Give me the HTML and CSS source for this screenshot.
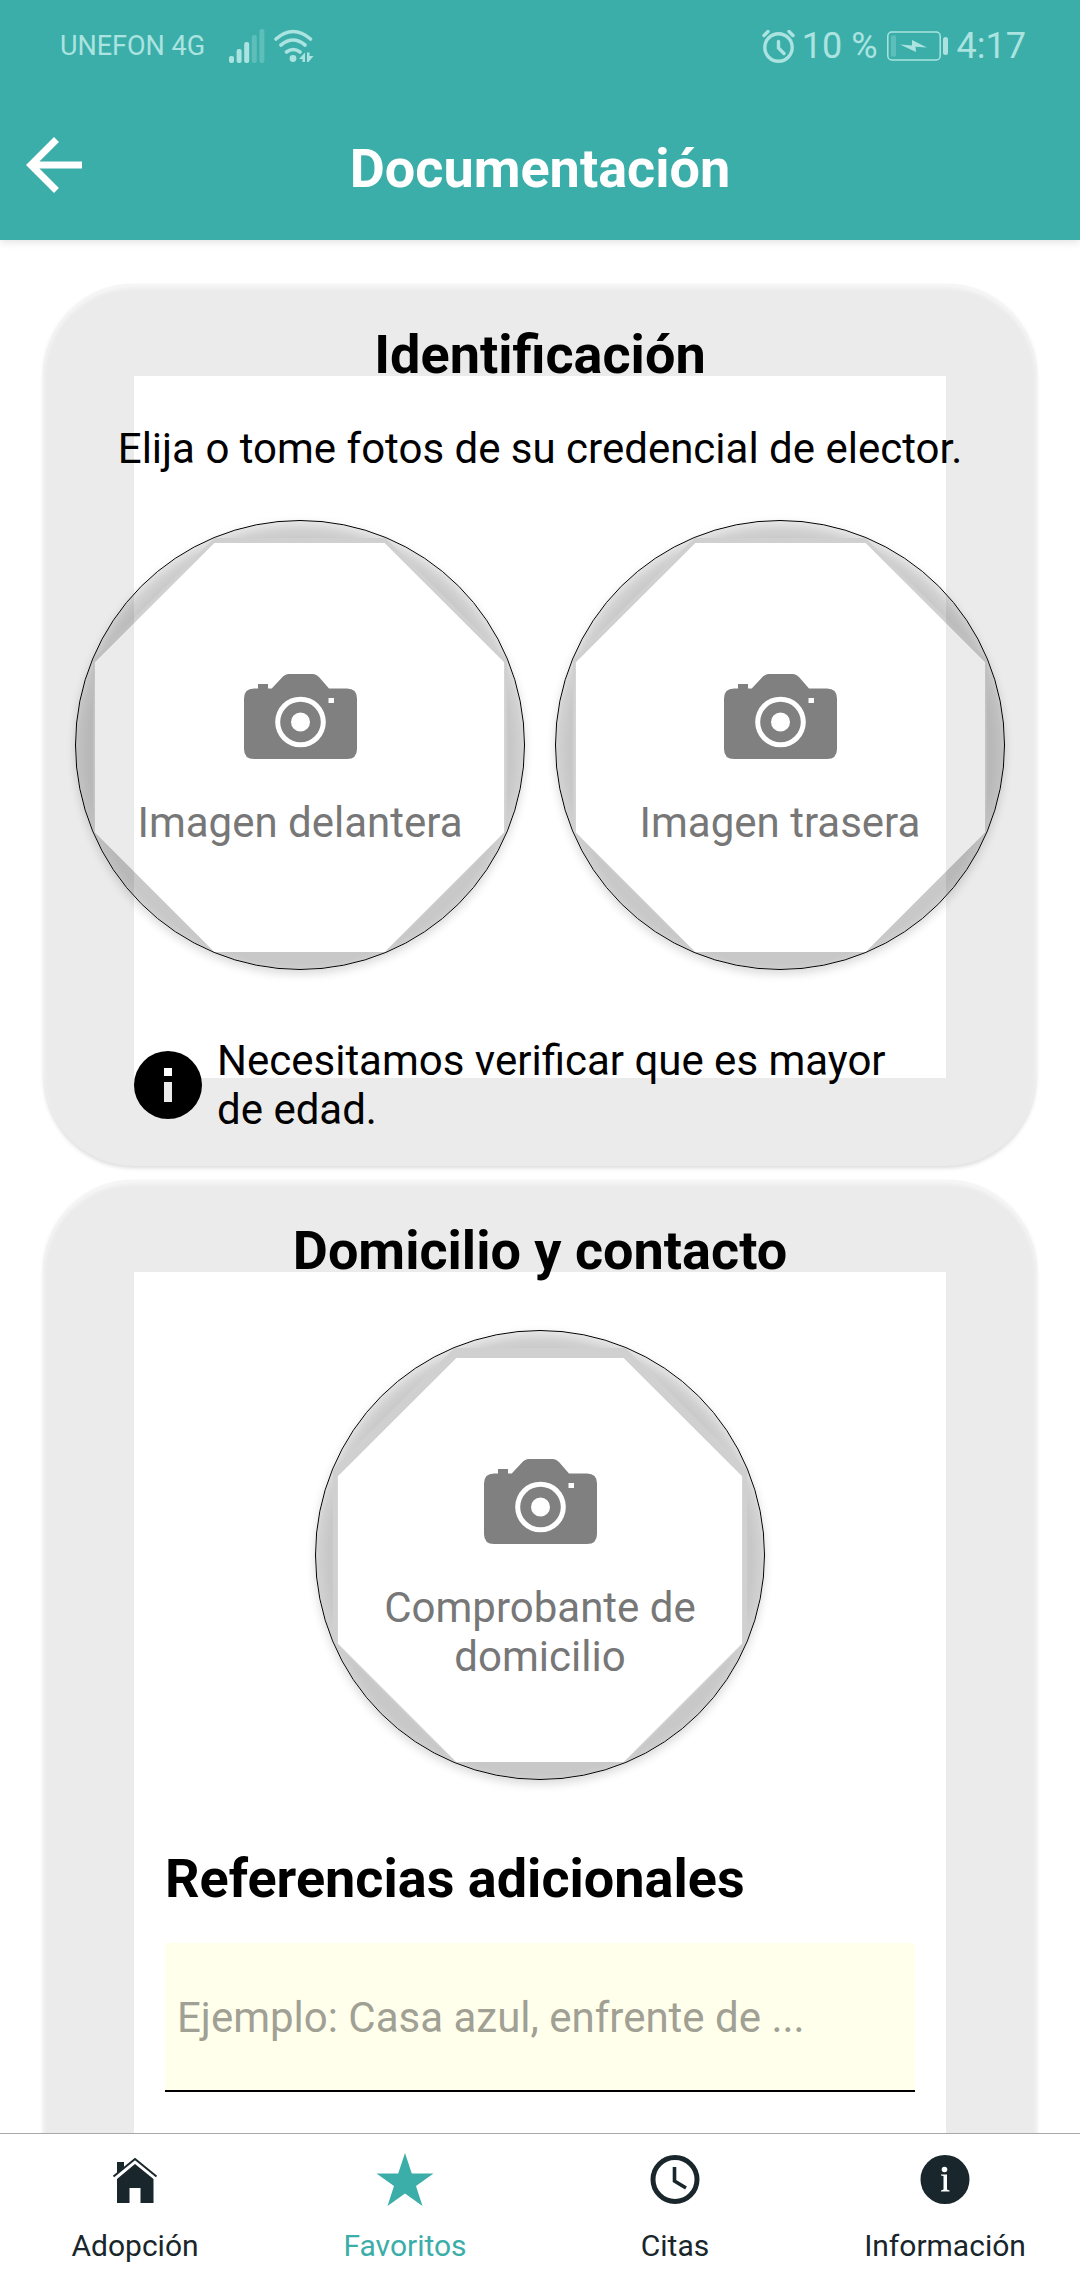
FILE: index.html
```html
<!DOCTYPE html>
<html lang="es">
<head>
<meta charset="utf-8">
<meta name="viewport" content="width=device-width, initial-scale=1">
<title>Documentación</title>
<link rel="stylesheet" href="styles.css">
</head>
<body>
<svg class="defs" width="0" height="0" aria-hidden="true">
  <defs>
    <radialGradient id="rim" gradientUnits="userSpaceOnUse" cx="225" cy="232" r="234">
      <stop offset="0.91" stop-color="#000" stop-opacity="0.216"/>
      <stop offset="0.95" stop-color="#000" stop-opacity="0.18"/>
      <stop offset="1" stop-color="#000" stop-opacity="0.08"/>
    </radialGradient>
    <clipPath id="disc"><circle cx="225" cy="225" r="225"/></clipPath>
    <symbol id="camera" viewBox="0 0 113 85">
      <path fill-rule="evenodd" d="M10 14.500H14V10H24V14.500H27.700L38 3.500Q41 0 45 0H69Q72 0 75 3L85 14.500H103Q113 14.500 113 24.500V75Q113 85 103 85H10Q0 85 0 75V24.500Q0 14.500 10 14.500ZM56.500 22.700a25.300 25.300 0 1 0 0 50.600a25.300 25.300 0 1 0 0-50.600ZM56.500 27.700a20.300 20.300 0 1 1 0 40.600a20.300 20.300 0 1 1 0-40.600ZM56.500 38.500a9.500 9.500 0 1 0 0 19a9.500 9.500 0 1 0 0-19ZM84.500 24H90V29H84.500Z"/>
    </symbol>
  </defs>
</svg>

<header class="top">
  <div class="status">
    <span class="carrier">UNEFON 4G</span>
    <svg class="signal" width="36" height="34" viewBox="0 0 36 34" aria-hidden="true">
      <rect x="0" y="27" width="5" height="7" rx="2"/><rect x="7.600" y="20" width="5" height="14" rx="2"/><rect x="15.200" y="13" width="5" height="21" rx="2"/>
      <rect class="dim" x="22.800" y="6" width="5" height="28" rx="2"/><rect class="dim" x="30.400" y="0" width="5" height="34" rx="2"/>
    </svg>
    <svg class="wifi" width="40" height="34" viewBox="0 0 40 34" aria-hidden="true">
      <g fill="none" stroke="currentColor" stroke-width="3.600" stroke-linecap="round"><path d="M2 10Q19 -5 36.500 10M7 16Q19 6 31 16M12.500 23Q19 18 26 23"/></g>
      <circle cx="19" cy="29.500" r="3.400"/><path d="M25 30L31 23.500V33H28.500V30ZM33 23.500H35.500V27H39.500L34.500 33H33Z"/>
    </svg>
    <span class="spacer"></span>
    <svg class="alarm" width="33" height="34" viewBox="0 0 33 34" aria-hidden="true">
      <g fill="none" stroke="currentColor" stroke-linecap="round"><circle cx="16.500" cy="18.500" r="13.700" stroke-width="3.400"/><path stroke-width="3.400" d="M2 6.500L6 2.500M27 2.500L31 6.500M16.500 12.500V19L22 24.500"/></g>
    </svg>
    <span class="clock">10 %</span>
    <svg class="battery" width="61" height="30" viewBox="0 0 61 30" aria-hidden="true">
      <rect x="0.800" y="1" width="52.400" height="28" rx="4" fill="none" stroke="currentColor" stroke-width="1.500"/>
      <rect class="dim" x="4" y="4.500" width="5" height="21" rx="1"/><rect x="56" y="6" width="5" height="18" rx="2.500"/>
      <path d="M13 13.500L25 14.500L25 9L40 16.500L28.500 15.800L29 21Z"/>
    </svg>
    <span class="clock time">4:17</span>
  </div>
  <div class="appbar">
    <button class="back" type="button" aria-label="Volver">
      <svg width="84" height="84" viewBox="0 0 24 24" aria-hidden="true"><path d="M20 11H7.830l5.590-5.590L12 4l-8 8 8 8 1.410-1.410L7.830 13H20v-2z"/></svg>
    </button>
    <h1 class="title">Documentación</h1>
  </div>
</header>

<main class="content">
  <section class="card">
    <h2 class="heading">Identificación</h2>
    <p class="lead">Elija o tome fotos de su credencial de elector.</p>
    <div class="photos">
      <button class="photo" type="button">
        <svg class="ring" viewBox="0 0 450 450" aria-hidden="true">
          <g clip-path="url(#disc)" fill-rule="evenodd">
            <path fill="url(#rim)" d="M0 0H450V450H0ZM139 17H311L433 139V311L311 433H139L17 311V139Z"/>
            <path fill="#000" fill-opacity="0.185" d="M139 17H311L433 139V311L311 433H139L17 311V139ZM139 22L19 142V313L139 433H310L430 313V142L310 22Z"/>
          </g>
        </svg>
        <svg class="camera" width="113" height="85" aria-hidden="true"><use href="#camera"/></svg>
        <span>Imagen delantera</span>
      </button>
      <button class="photo" type="button">
        <svg class="ring" viewBox="0 0 450 450" aria-hidden="true">
          <g clip-path="url(#disc)" fill-rule="evenodd">
            <path fill="url(#rim)" d="M0 0H450V450H0ZM139 17H311L433 139V311L311 433H139L17 311V139Z"/>
            <path fill="#000" fill-opacity="0.185" d="M139 17H311L433 139V311L311 433H139L17 311V139ZM140 22L20 142V313L140 433H311L431 313V142L311 22Z"/>
          </g>
        </svg>
        <svg class="camera" width="113" height="85" aria-hidden="true"><use href="#camera"/></svg>
        <span>Imagen trasera</span>
      </button>
    </div>
    <div class="notice">
      <svg width="68" height="68" viewBox="0 0 68 68" aria-hidden="true"><path fill-rule="evenodd" d="M34 0a34 34 0 1 0 0 68a34 34 0 1 0 0-68ZM30 17H38V25H30ZM30 31H38V51H30Z"/></svg>
      <p>Necesitamos verificar que es mayor de edad.</p>
    </div>
  </section>

  <section class="card">
    <h2 class="heading">Domicilio y contacto</h2>
    <div class="photos">
      <button class="photo" type="button">
        <svg class="ring" viewBox="0 0 450 450" aria-hidden="true">
          <g clip-path="url(#disc)" fill-rule="evenodd">
            <path fill="url(#rim)" d="M0 0H450V450H0ZM139 17H311L433 139V311L311 433H139L17 311V139Z"/>
            <path fill="#000" fill-opacity="0.185" d="M139 17H311L433 139V311L311 433H139L17 311V139ZM141 27L22 146V314L141 433H309L428 314V146L309 27Z"/>
          </g>
        </svg>
        <svg class="camera" width="113" height="85" aria-hidden="true"><use href="#camera"/></svg>
        <span>Comprobante de domicilio</span>
      </button>
    </div>
    <div class="field">
      <label class="heading" for="referencias">Referencias adicionales</label>
      <input id="referencias" type="text" placeholder="Ejemplo: Casa azul, enfrente de ...">
    </div>
  </section>
</main>

<nav class="tabs">
  <a class="tab" href="#adopcion">
    <svg width="60" height="60" viewBox="0 0 60 60" aria-hidden="true"><path d="M12 29L30 14L48.500 29V53H35.500V38H24.500V53H12Z"/><path d="M12 23.500V12H19V17.500Z"/><path fill="none" stroke="currentColor" stroke-width="2" d="M8.500 26.500L30 9L51.500 26.500"/></svg>
    <span>Adopción</span>
  </a>
  <a class="tab active" href="#favoritos">
    <svg width="60" height="60" viewBox="0 0 60 60" aria-hidden="true"><path d="M30 3L36.800 23.500H58.500L41 36L47.500 56L30 43.500L12.500 56L19 36L1.500 23.500H23.200Z"/></svg>
    <span>Favoritos</span>
  </a>
  <a class="tab" href="#citas">
    <svg width="60" height="60" viewBox="0 0 60 60" aria-hidden="true"><g fill="none" stroke="currentColor"><circle cx="30" cy="29.500" r="22" stroke-width="5"/><path stroke-width="3.600" d="M29.500 17V31L41 38"/></g></svg>
    <span>Citas</span>
  </a>
  <a class="tab" href="#informacion">
    <svg width="60" height="60" viewBox="0 0 60 60" aria-hidden="true"><circle cx="30" cy="29.500" r="24.500"/><g fill="#fff"><circle cx="29.500" cy="19.500" r="2.800"/><path d="M26 24.500H32V39.500L34.500 40.500V41.500H26V40.500L28.500 39.500V26L26 25.500Z"/></g></svg>
    <span>Información</span>
  </a>
</nav>
</body>
</html>
```
FILE: styles.css
```css
* {
  box-sizing: border-box;
}

body {
  margin: 0;
  height: 100vh;
  display: flex;
  flex-direction: column;
  background: #fff;
  color: #000;
  font-family: Roboto, "Liberation Sans", sans-serif;
  font-size: 42px;
  line-height: 49px;
}

h1, h2, p {
  margin: 0;
}

svg {
  display: block;
  flex: none;
  fill: currentColor;
}

button {
  border: 0;
  padding: 0;
  background: none;
  color: inherit;
  font: inherit;
}

.defs {
  position: absolute;
}

/* Header */

.top {
  background: #3baea9;
  color: #fff;
  box-shadow: 0 2px 8px rgba(0, 0, 0, 0.12);
}

.status {
  height: 92px;
  padding: 0 54px 0 60px;
  display: flex;
  align-items: center;
  color: #abe3e0;
}

.carrier {
  font-size: 27px;
}

.signal {
  margin-left: 24px;
}

.wifi {
  margin-left: 9px;
}

.spacer {
  flex: 1;
}

.dim {
  opacity: 0.3;
}

.clock {
  font-size: 36px;
  margin-left: 7px;
}

.battery {
  margin-left: 9px;
}

.time {
  margin-left: 9px;
}

.appbar {
  height: 148px;
  padding: 0 12px 2px;
  display: grid;
  grid-template-columns: 1fr auto 1fr;
  align-items: center;
}

.title {
  padding-top: 8px;
  font-size: 54px;
  line-height: 64px;
  font-weight: 700;
}

/* Scrolling content */

.content {
  flex: 1;
  min-height: 0;
  overflow-y: auto;
  scrollbar-width: none;
  padding: 44px;
  display: flex;
  flex-direction: column;
  gap: 14px;
}

.card {
  flex: none;
  padding: 39px 30px 32px;
  border-radius: 90px;
  background: linear-gradient(#fff, #fff) 90px 92px / calc(100% - 180px) calc(100% - 180px) no-repeat, #ebebeb;
  box-shadow: 0 2px 4px rgba(0, 0, 0, 0.15), inset 0 4px 4px rgba(255, 255, 255, 0.6);
  text-align: center;
}

.card:last-child {
  padding-bottom: 240px;
}

.heading {
  font-size: 54px;
  line-height: 64px;
  font-weight: 700;
}

.lead {
  margin-top: 37px;
}

.photos {
  margin-top: 47px;
  display: flex;
  justify-content: center;
  gap: 30px;
}

.photo {
  position: relative;
  width: 450px;
  height: 450px;
  padding: 30px 60px 0;
  border: 1px solid #000;
  border-radius: 50%;
  box-shadow: 0 4px 10px rgba(0, 0, 0, 0.15);
  display: flex;
  flex-direction: column;
  align-items: center;
  justify-content: center;
  gap: 39px;
  color: #777;
}

.ring {
  position: absolute;
  inset: 0;
  width: 100%;
  height: 100%;
}

.camera {
  color: #808080;
}

.notice {
  margin: 66px 90px 0 60px;
  display: flex;
  align-items: center;
  gap: 15px;
  text-align: left;
}

.field {
  margin: 67px 91px 0 91px;
  display: flex;
  flex-direction: column;
  gap: 32px;
  text-align: left;
}

.field input {
  width: 100%;
  height: 149px;
  padding: 2px 12px 0;
  border: 0;
  border-bottom: 2px solid #000;
  border-radius: 0;
  background: #ffffec;
  color: #000;
  font: inherit;
}

.field input::placeholder {
  color: #a0a094;
  opacity: 1;
}

/* Bottom navigation */

.tabs {
  display: grid;
  grid-template-columns: repeat(4, 1fr);
  border-top: 1px solid #a8a8a8;
  background: #fff;
}

.tab {
  padding: 16px 0 16px;
  display: flex;
  flex-direction: column;
  align-items: center;
  gap: 18px;
  color: #19262b;
  font-size: 30px;
  line-height: 36px;
  text-decoration: none;
}

.tab.active {
  color: #3baea9;
}
```
